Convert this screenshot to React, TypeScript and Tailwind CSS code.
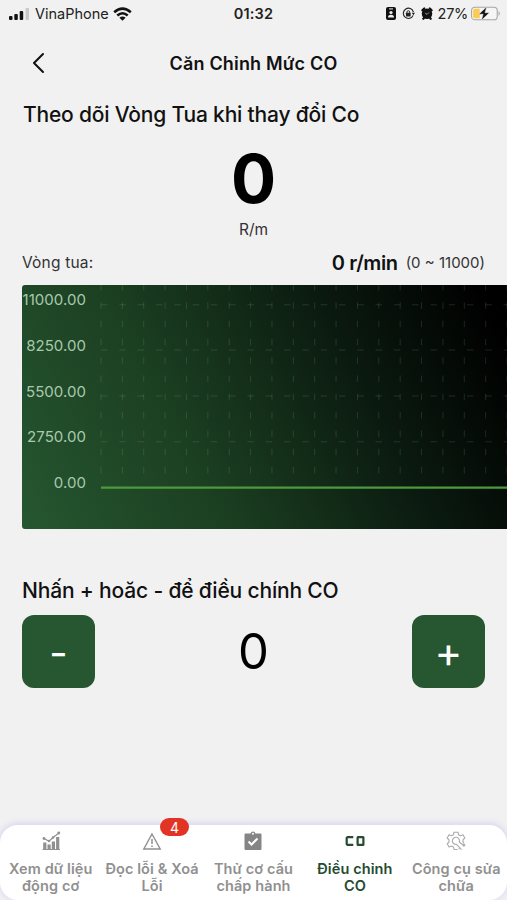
import type { ReactNode } from 'react'

const yLabels = ['11000.00', '8250.00', '5500.00', '2750.00', '0.00']
const columns = Array.from({ length: 20 }, (_, i) => 79 + i * 21.37)
const rows = [19.8, 65, 111, 156.8]

function StatusBar() {
    return (
        <div className="grid h-[27px] grid-cols-3 items-center text-[15px] text-[#222]">
            <div className="flex items-center pl-2">
                <svg className="h-3 w-[22px]" viewBox="0 0 22 12">
                    <rect x="1" y="8" width="3.5" height="4" rx="1" fill="#111" />
                    <rect x="6.3" y="6" width="3.5" height="6" rx="1" fill="#111" />
                    <rect x="11.7" y="3" width="3.5" height="9" rx="1" fill="#111" />
                    <rect x="17.5" y="0" width="3.5" height="12" rx="1" fill="#c9c9c9" />
                </svg>
                <span className="ml-[5px] text-[14.5px]">VinaPhone</span>
                <svg className="ml-1 h-[14px] w-[19px]" viewBox="0 0 19 14" fill="none" stroke="#111" strokeWidth="2.6">
                    <path d="M1.2 5.2Q9.5-2 17.8 5.2" />
                    <path d="M4.3 8.5Q9.5 4 14.7 8.5" />
                    <path d="M9.5 13.8L6.4 10.7Q9.5 8.3 12.6 10.7Z" fill="#111" stroke="none" />
                </svg>
            </div>
            <div className="pt-px text-center text-[14.5px] font-semibold tracking-[0.2px]">01:32</div>
            <div className="flex items-center justify-end pr-[6px]">
                <svg className="h-[13px] w-[10px]" viewBox="0 0 10 13">
                    <rect width="10" height="13" rx="2" fill="#111" />
                    <rect x="3" y="1.4" width="4" height="1" fill="#eee" />
                    <circle cx="5" cy="5.5" r="1.6" fill="#eee" />
                    <path d="M2 10.5Q2 7.7 5 7.7T8 10.5Z" fill="#eee" />
                </svg>
                <svg className="ml-[6px] h-[13px] w-[13px]" viewBox="0 0 14 14" fill="none" stroke="#222" strokeWidth="1.2">
                    <path d="M12 9A5.5 5.5 0 1 1 12.3 5.5" />
                    <path d="M10.5 6.3H14L12.3 9Z" fill="#222" stroke="none" />
                    <rect x="4.3" y="6.3" width="5" height="3.8" rx="0.5" fill="#222" stroke="none" />
                    <path d="M5.3 6.5V5.5A1.5 1.5 0 0 1 8.3 5.5V6.5" strokeWidth="1" />
                </svg>
                <svg className="ml-[6px] h-[13px] w-3" viewBox="0 0 13 14">
                    <path d="M1.5 3.5L3.5 1.6M11.5 3.5L9.5 1.6M2.5 12.7L3.5 11.5M10.5 12.7L9.5 11.5" stroke="#111" strokeWidth="2.4" strokeLinecap="round" />
                    <circle cx="6.5" cy="7.3" r="5.7" fill="#111" />
                    <path d="M4.5 6.5L6.5 8L8.7 5.8" stroke="#ccc" fill="none" strokeWidth="0.8" />
                </svg>
                <span className="ml-[5px] text-[14.5px] tracking-[-0.3px]">27%</span>
                <svg className="ml-[3px] h-[15px] w-[30px]" viewBox="0 0 31 15">
                    <rect x="0.6" y="1" width="26.5" height="13" rx="3.5" fill="#f5f5f5" stroke="#a5a5a5" strokeWidth="1.1" />
                    <path d="M4 2.5H9V12.5H4Q2.2 12.5 2.2 10.5V4.5Q2.2 2.5 4 2.5Z" fill="#fccb50" />
                    <path d="M28.5 5Q31 7.5 28.5 10Z" fill="#a5a5a5" />
                    <path d="M16.3 0.5L8 8.2H12.6L10.7 14.5L19 6.7H14.4Z" fill="#111" stroke="#f3f3f3" strokeWidth="0.5" />
                </svg>
            </div>
        </div>
    )
}

function RpmChart() {
    return (
        <div className="ml-[22px] mt-[9px] flex h-[244px] rounded-l-[3px] bg-[linear-gradient(63deg,#265730_0%,#1b3e21_35%,#0b1b10_67%,#000_95%)]">
            <div className="-ml-2 flex w-[72px] flex-col items-end pt-[3px] text-[15px] leading-[23px] tracking-[0.05px] text-[#a9c9ad]">
                {yLabels.map((label) => (
                    <div key={label} className="h-[45.8px]">{label}</div>
                ))}
            </div>
            <svg className="-ml-16 h-[244px] w-[485px]" viewBox="0 0 485 244">
                <g stroke="#b9d6b9" strokeOpacity="0.15" strokeWidth="1">
                    {columns.map((x) => (
                        <line key={x} x1={x} x2={x} y1="0" y2="196" strokeDasharray="6.5 11.8" strokeDashoffset="1" />
                    ))}
                    {rows.map((y) => (
                        <line key={y} x1="79" x2="485" y1={y} y2={y} strokeDasharray="6.5 11.8" />
                    ))}
                </g>
                <line x1="79" x2="485" y1="202.6" y2="202.6" stroke="#4c9a3d" strokeWidth="2.4" />
            </svg>
        </div>
    )
}

interface TabProps {
    icon: ReactNode
    first: string
    second: string
    active?: boolean
}

function Tab({ icon, first, second, active }: TabProps) {
    return (
        <div className={active ? 'flex flex-col items-center text-[#254b30]' : 'flex flex-col items-center text-[#909090]'}>
            <div className="flex h-[35px] items-center pb-[3px]">{icon}</div>
            <div className="whitespace-nowrap text-center text-[14.5px] font-semibold leading-[17px] tracking-[0.1px]">
                {first}
                <br />
                {second}
            </div>
        </div>
    )
}

function TabBar() {
    return (
        <nav className="mt-auto grid h-[75px] grid-cols-5 rounded-[18px] bg-white shadow-[0_-1px_6px_1px_#d9d4f0]">
            <Tab
                first="Xem dữ liệu"
                second="động cơ"
                icon={
                    <svg className="h-5 w-5" viewBox="0 0 20 20" fill="currentColor">
                        <path d="M2.2 11.5h3.2v7H2.2zM6.5 13.5h3.2v5H6.5zM10.8 10.5H14v8h-3.2zM15.1 6h3.2v12.500h-3.2zM1.5 18h17.5v1H1.5z" />
                        <path d="M3 7.5L8 10.2L12 6.5L18 2" fill="none" stroke="currentColor" strokeWidth="1.200" />
                        <circle cx="3" cy="7.5" r="1.4" />
                        <circle cx="8" cy="10" r="1.2" />
                        <circle cx="12" cy="6.5" r="1.2" />
                        <circle cx="17.8" cy="2" r="1.4" />
                    </svg>
                }
            />
            <Tab
                first="Đọc lỗi & Xoá"
                second="Lỗi"
                icon={
                    <div className="relative">
                        <svg className="h-5 w-5" viewBox="0 0 20 20" fill="none" stroke="currentColor" strokeWidth="1.4">
                            <path d="M10 3L18.2 18H1.800Z" />
                            <path d="M10 8V13M10 14.5V16" strokeWidth="1.5" />
                        </svg>
                        <span className="absolute -top-[13px] left-[18px] flex h-[18px] w-[29px] items-center justify-center rounded-full bg-[#e23424] text-[14px] text-white">4</span>
                    </div>
                }
            />
            <Tab
                first="Thử cơ cấu"
                second="chấp hành"
                icon={
                    <svg className="h-5 w-5" viewBox="0 0 20 20">
                        <path d="M2.5 2.5H7.5Q8 0.5 10 0.5T12.5 2.5H17.5Q18.5 2.5 18.5 3.5V18Q18.5 19 17.5 19H2.5Q1.5 19 1.5 18V3.5Q1.5 2.5 2.5 2.5Z" fill="#858585" />
                        <path d="M5.5 10.5L8.5 13.5L14.5 7.5" stroke="white" strokeWidth="2" fill="none" />
                        <circle cx="10" cy="2.8" r="1" fill="white" />
                    </svg>
                }
            />
            <Tab
                active
                first="Điều chỉnh"
                second="CO"
                icon={
                    <svg className="h-[10px] w-5" viewBox="0 0 20 10" fill="none" stroke="currentColor" strokeWidth="2.2">
                        <path d="M8.3 1.2H2.5L1.700 2V8L2.500 8.8H8.3" />
                        <rect x="12.6" y="1.2" width="5.8" height="7.6" rx="0.4" />
                    </svg>
                }
            />
            <Tab
                first="Công cụ sửa"
                second="chữa"
                icon={
                    <svg className="h-5 w-5" viewBox="0 0 20 20" fill="none" stroke="#aaa" strokeWidth="1.1" strokeLinejoin="round">
                        <path d="M13.5 18L12.5 17.5M11.5 18.5H8L7.5 16L5.5 15L3 16L1.2 12.8L3 11V8.8L1.2 7L3 3.8L5.5 4.8L7.5 3.7L8 1.2H12L12.5 3.7L14.5 4.8L17 3.8L18.8 7L17 8.8V11L18 12" />
                        <path d="M13.3 11.2A3.6 3.6 0 1 0 10.5 13.4L15.5 18.7" />
                        <path d="M13.3 11.2L16.5 13.5" />
                        <circle cx="17.8" cy="14" r="1" fill="#aaa" />
                    </svg>
                }
            />
        </nav>
    )
}

export default function App() {
    return (
        <div className="flex h-[900px] w-[507px] flex-col overflow-hidden bg-[#f1f1f1] font-['Inter',sans-serif] text-[#111]">
            <StatusBar />
            <header className="grid h-[72px] grid-cols-[80px_1fr_80px] items-center">
                <svg className="ml-8 h-[22px] w-3" viewBox="0 0 12 22" fill="none" stroke="#111" strokeWidth="2" strokeLinecap="round" strokeLinejoin="round">
                    <path d="M11 2L2 11L11 20" />
                </svg>
                <h1 className="text-center text-[18px] font-semibold tracking-[0.17px]">Căn Chỉnh Mức CO</h1>
            </header>
            <main>
                <h2 className="ml-[23px] mt-px text-[21px] font-medium leading-[30px] tracking-[-0.19px]">Theo dõi Vòng Tua khi thay đổi Co</h2>
                <div className="mt-[14px] text-center text-[67px] font-bold leading-[70px] text-black">0</div>
                <div className="mt-[4px] text-center text-[15.5px] leading-6 text-[#333]">R/m</div>
                <div className="mt-[8px] flex h-[26px] items-center px-[22px] text-[15px] text-[#333]">
                    <span className="text-[15.5px] tracking-[0.2px]">Vòng tua:</span>
                    <span className="ml-auto text-[20px] font-semibold tracking-[-0.4px] text-[#111]">0 r/min</span>
                    <span className="ml-2">(0 ~ 11000)</span>
                </div>
                <RpmChart />
                <h2 className="ml-[22px] mt-[47px] text-[21px] font-medium leading-[30px] tracking-[-0.17px]">Nhấn + hoăc - để điều chính CO</h2>
                <div className="mt-[9px] flex items-center justify-between px-[22px]">
                    <button className="h-[73px] w-[73px] rounded-xl bg-[#275730] pt-[3px] text-[40px] leading-[70px] text-white">-</button>
                    <span className="text-[49px] leading-[73px] text-black">0</span>
                    <button className="h-[73px] w-[73px] rounded-xl bg-[#275730] text-[42px] leading-[73px] text-white">+</button>
                </div>
            </main>
            <TabBar />
        </div>
    )
}
